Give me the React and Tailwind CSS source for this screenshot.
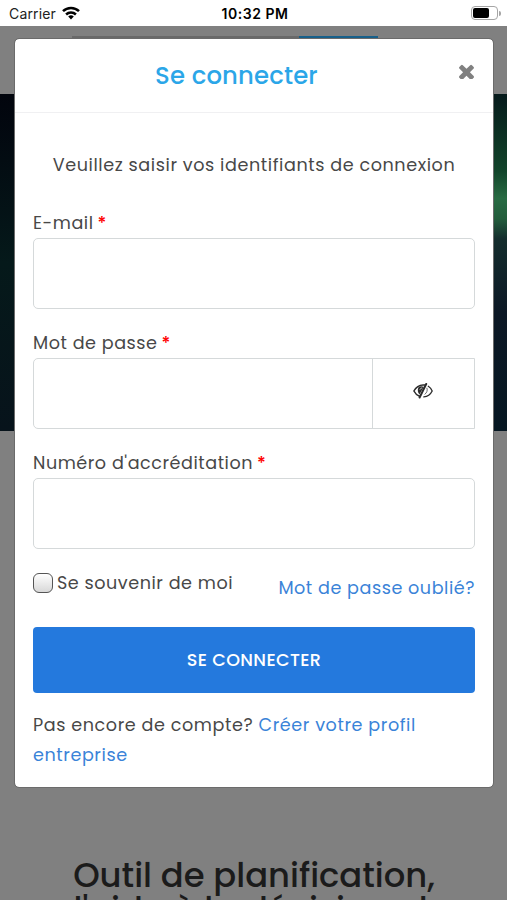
function CloseIcon() {
  return (
    <svg viewBox="302 494 1188 1188" className="h-[15px] w-[15px] fill-[#808080]" aria-hidden="true">
      <path transform="translate(0 192)" d="M1490 1322q0 40-28 68l-136 136q-28 28-68 28t-68-28l-294-294-294 294q-28 28-68 28t-68-28l-136-136q-28-28-28-68t28-68l294-294-294-294q-28-28-28-68t28-68l136-136q28-28 68-28t68 28l294 294 294-294q28-28 68-28t68 28l136 136q28 28 28 68t-28 68l-294 294 294 294q28 28 28 68z" />
    </svg>
  );
}

function EyeSlashIcon() {
  return (
    <svg viewBox="0 0 20 16" className="h-[16px] w-[20px]" fill="none" stroke="#2b2b2b" strokeLinecap="round" aria-hidden="true">
      <path d="M11.800 2C6.500 1.300 3 4 .9 8c1.300 2.600 3.200 4.300 5.600 5.200" strokeWidth="1.500" />
      <path d="M15.300 3.300C17 4.400 18.300 6 19.200 8c-1.800 3.600-4.700 5.600-8.400 5.900" strokeWidth="1.300" />
      <path d="M14 5.200c.7 2.400-.1 4.600-2.100 6" strokeWidth=".7" />
      <path d="M5.500 4.200c-1.200 2.500-.9 5 .9 7.200L10.800 4C9 2.800 6.800 2.900 5.500 4.200z" fill="#2b2b2b" stroke="none" />
      <path d="M7 6.400c.3-.8.900-1.300 1.800-1.400" stroke="#fff" strokeWidth=".7" />
      <path d="M13.200 1L6.600 14.500" strokeWidth="2" />
    </svg>
  );
}

function StatusBar() {
  return (
    <div className="grid h-[26px] grid-cols-3 items-center bg-white pr-[6px] pl-[9px] font-['Inter',sans-serif] text-[14px] text-[#222]">
      <div className="flex items-center gap-[6px]">
        <span className="text-[14px] tracking-[0.15px]">Carrier</span>
        <svg viewBox="0 0 18 14" className="h-[14px] w-[18px]" aria-hidden="true">
          <g fill="none" stroke="#000" strokeWidth="2.500">
            <path d="M1 5.200a11.300 11.300 0 0 1 16 0" />
            <path d="M4.100 8.500a7 7 0 0 1 9.800 0" />
          </g>
          <path d="M6.200 10.600a4 4 0 0 1 5.600 0L9 13.600z" />
        </svg>
      </div>
      <span className="pt-px text-center font-semibold tracking-[0.550px] text-black">10:32 PM</span>
      <div className="flex items-center justify-end gap-px">
        <div className="h-[14px] w-[27px] rounded-[4px] border border-[#a5a5a5] p-[1px]">
          <div className="h-[10px] w-[16px] rounded-[2px] bg-black" />
        </div>
        <div className="h-[5px] w-[2px] rounded-r-full bg-[#a5a5a5]" />
      </div>
    </div>
  );
}

function Label({ children }) {
  return (
    <label className="mb-px flex h-[28px] items-center gap-[4px] tracking-[0.540px]">
      {children}
      <span className="font-medium text-[#f00]">*</span>
    </label>
  );
}

function LoginDialog() {
  return (
    <div className="absolute top-[38px] left-[14px] flex h-[750px] w-[480px] flex-col rounded-[5px] border border-[#6b6b6b] bg-white bg-clip-padding text-[17.580px] tracking-[0.580px] text-[#484848]">
      <header className="flex h-[74px] items-center border-b border-[#f0f0f2] px-[18px]">
        <h2 className="grow pt-[2px] text-center text-[24.340px] font-medium tracking-[0.170px] text-[#2ba6e8]">Se connecter</h2>
        <button className="mb-[9px] flex w-[35px] justify-end pr-px"><CloseIcon /></button>
      </header>
      <div className="flex flex-col px-[18px] pt-[37px]">
        <p className="h-[30px] text-center leading-[30px] whitespace-nowrap">Veuillez saisir vos identifiants de connexion</p>
        <div className="mt-[29px]">
          <Label>E-mail</Label>
          <div className="h-[71px] rounded-[5px] border border-[#d5d9da]" />
        </div>
        <div className="mt-[20px]">
          <Label>Mot de passe</Label>
          <div className="flex h-[71px] rounded-l-[5px] border border-[#d5d9da]">
            <div className="grow" />
            <div className="flex w-[102px] items-center justify-center border-l border-[#d5d9da] pr-[2px] pb-[5px]"><EyeSlashIcon /></div>
          </div>
        </div>
        <div className="mt-[20px]">
          <Label>Numéro d'accréditation</Label>
          <div className="h-[71px] rounded-[5px] border border-[#d5d9da]" />
        </div>
        <div className="mt-[18px] flex h-[40px] items-start justify-between">
          <div className="flex h-[32px] items-center gap-[4px]">
            <div className="h-[20px] w-[20px] rounded-[6px] border-[1.500px] border-[#555] bg-linear-to-b from-white to-[#d8d8d8]" />
            <span className="leading-[32px] tracking-[0.540px]">Se souvenir de moi</span>
          </div>
          <a className="leading-[42px] tracking-[0.540px] text-[#3a83d8]">Mot de passe oublié?</a>
        </div>
        <button className="mt-[20px] h-[66px] rounded-[4px] bg-[#2479dd] text-[17.580px] font-medium tracking-[0.350px] text-white">SE CONNECTER</button>
        <p className="mt-[18px] leading-[29.500px] tracking-[0.580px]">
          Pas encore de compte? <a className="text-[#3a83d8]">Créer votre profil<br />entreprise</a>
        </p>
      </div>
    </div>
  );
}

export default function App() {
  return (
    <div className="relative h-[900px] w-[507px] overflow-hidden bg-[#808080] font-['Poppins','Inter',sans-serif]">
      <StatusBar />
      <div className="flex h-[68px] items-start bg-[#808080] pt-[10px] pl-[72px]">
        <div className="h-[30px] w-[227px] bg-[#696969]" />
        <div className="h-[30px] w-[79px] bg-[#17608a]" />
      </div>
      <div className="flex h-[337px] justify-between">
        <div className="w-[20px] bg-linear-to-b from-[#02050d] via-[#05191a] to-[#07131b]" />
        <div className="w-[20px] bg-[linear-gradient(to_bottom,#061a1b_0%,#12452b_23%,#286b43_31%,#235d3c_37%,#142d2d_43%,#0c1825_65%,#061722_100%)]" />
      </div>
      <h1 className="mt-[428px] pl-px text-center text-[33.800px] leading-[33.800px] font-medium whitespace-nowrap text-[#1b1b1b]">
        Outil de planification,<br />d'aide à la décision, de
      </h1>
      <LoginDialog />
    </div>
  );
}
